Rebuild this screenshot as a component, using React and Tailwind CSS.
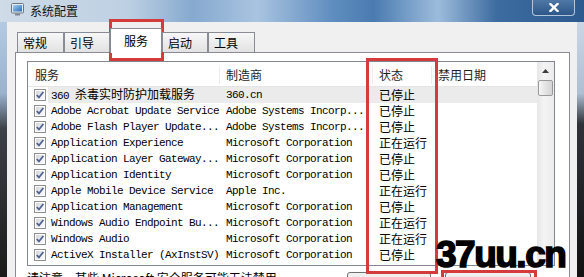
import React from "react";

const rows = [
  { name: "360 ", cjk: "杀毒实时防护加载服务", maker: "360.cn", state: "已停止", sel: true },
  { name: "Adobe Acrobat Update Service", maker: "Adobe Systems Incorp...", state: "已停止" },
  { name: "Adobe Flash Player Update...", maker: "Adobe Systems Incorp...", state: "已停止" },
  { name: "Application Experience", maker: "Microsoft Corporation", state: "正在运行" },
  { name: "Application Layer Gateway...", maker: "Microsoft Corporation", state: "已停止" },
  { name: "Application Identity", maker: "Microsoft Corporation", state: "已停止" },
  { name: "Apple Mobile Device Service", maker: "Apple Inc.", state: "正在运行" },
  { name: "Application Management", maker: "Microsoft Corporation", state: "已停止" },
  { name: "Windows Audio Endpoint Bu...", maker: "Microsoft Corporation", state: "正在运行" },
  { name: "Windows Audio", maker: "Microsoft Corporation", state: "正在运行" },
  { name: "ActiveX Installer (AxInstSV)", maker: "Microsoft Corporation", state: "已停止" },
  { name: "", maker: "", state: "" },
];

const tabs = [
  { label: "常规", w: "w-[47px] ml-[2px]" },
  { label: "引导", w: "w-[46px]" },
  { label: "服务", w: "w-[52px]", active: true },
  { label: "启动", w: "w-[46px]" },
  { label: "工具", w: "w-[47px]" },
];

const CheckBox = () => (
  <svg width="12" height="12" viewBox="0 0 12 12" className="shrink-0">
    <defs>
      <linearGradient id="cbfill" x1="0" y1="0" x2="1" y2="1">
        <stop offset="0" stopColor="#d6d8db" />
        <stop offset="1" stopColor="#fafafa" />
      </linearGradient>
    </defs>
    <rect x="0.5" y="0.5" width="11" height="11" fill="#fff" stroke="#8e8f8f" />
    <rect x="2" y="2" width="8" height="8" fill="url(#cbfill)" />
    <path d="M2.8 5.9 L4.9 8.6 L9.3 2.9" fill="none" stroke="#4b5f8c" strokeWidth="1.7" strokeLinejoin="round" />
  </svg>
);

const WinIcon = () => (
  <svg width="13" height="13" viewBox="0 0 13 13">
    <defs>
      <linearGradient id="scr" x1="0" y1="0" x2="1" y2="1">
        <stop offset="0" stopColor="#9fd0f5" />
        <stop offset="1" stopColor="#2b6cb6" />
      </linearGradient>
    </defs>
    <rect x="0.5" y="0.5" width="12" height="9.5" rx="1" fill="#e9ecef" stroke="#6d7680" />
    <rect x="2" y="2" width="9" height="6.5" fill="url(#scr)" />
    <rect x="4" y="10.5" width="5" height="2" fill="#7c8590" />
  </svg>
);

const CloseX = () => (
  <svg width="10" height="9" viewBox="0 0 10 9">
    <path d="M1.5 1 L8.5 8 M8.5 1 L1.5 8" stroke="#fff" strokeWidth="2.4" strokeLinecap="square" />
  </svg>
);

const mono = "font-['Liberation_Mono','Noto_Sans_CJK_SC',monospace] text-[11px] tracking-[-0.6px] text-black";

export default function App() {
  return (
    <div className="relative w-[584px] h-[277px] overflow-hidden flex flex-col bg-[#1c1c1c] font-['Noto_Sans_CJK_SC',sans-serif]">
      {/* title bar */}
      <div className="h-[22px] shrink-0 flex items-start bg-[linear-gradient(90deg,#cfdbe7_0%,#bdd0e3_22%,#86a9cf_33%,#a9c4e0_44%,#5f8dbf_57%,#4a7bb0_64%,#9dbcdc_75%,#3d6ca0_85%,#2c5a8e_100%)]">
        <div className="mt-[3px] ml-[11px]">
          <WinIcon />
        </div>
        <span className="ml-[6px] mt-[2px] text-[12px] leading-[17px] text-[#111]">系统配置</span>
        <div className="ml-auto mr-[9px] w-[43px] h-[16px] border border-t-0 border-[#b3c6dc] rounded-b-[4px] bg-[linear-gradient(180deg,#4f78a6,#2d5788)] flex items-center justify-center">
          <CloseX />
        </div>
      </div>

      <div className="flex-1 flex min-h-0">
        <div className="w-[7px] shrink-0 bg-[linear-gradient(180deg,#b4cae2_0%,#9ab2ce_28%,#3c4047_42%,#1a1a1a_100%)]" />

        <div className="flex-1 bg-[#f0f0f0] pl-[8px] pr-[7px] pt-[6px] flex flex-col min-w-0">
          {/* tabs */}
          <div className="h-[24px] flex items-end shrink-0 relative z-10">
            {tabs.map((t) =>
              t.active ? (
                <div
                  key={t.label}
                  className={`${t.w} h-[25px] -mb-px bg-white border border-b-0 border-[#898c95] flex items-start justify-center pt-[4px] text-[12px] leading-[16px] text-black`}
                >
                  {t.label}
                </div>
              ) : (
                <div
                  key={t.label}
                  className={`${t.w} h-[20px] bg-[linear-gradient(180deg,#f7f7f7,#e2e2e2)] border border-b-0 border-[#898c95] flex items-center pl-[5px] text-[12px] leading-[16px] text-black`}
                >
                  {t.label}
                </div>
              )
            )}
          </div>

          {/* panel */}
          <div className="flex-1 bg-white border border-[#898c95] pl-[11px] pr-[14px] pt-[8px] flex flex-col">
            <div className="h-[205px] shrink-0 border border-[#828790] flex overflow-hidden">
              <div className="flex-1 flex flex-col min-w-0">
                <div className="h-[25px] shrink-0 flex items-center pt-[2px] border-b border-[#e5e5e5] text-[12px] text-[#1e1e1e]">
                  <div className="w-[192px] pl-[7px] border-r border-[#ececec]">服务</div>
                  <div className="w-[153px] pl-[6px] border-r border-[#ececec]">制造商</div>
                  <div className="w-[59px] pl-[6px] border-r border-[#ececec]">状态</div>
                  <div className="flex-1 pl-[6px]">禁用日期</div>
                </div>
                {rows.map((r, i) => (
                  <div key={i} className="h-[16px] shrink-0 flex items-center">
                    <div className="w-[192px] flex items-center pl-[6px] gap-[2px] h-full">
                      <CheckBox />
                      <div className={`flex-1 h-full flex items-center pl-[3px] ${r.sel ? "bg-[#ebebeb]" : ""}`}>
                        {r.name && (
                          <span className={`${mono} whitespace-pre leading-[16px]`}>
                            {r.name}
                            {r.cjk && <span className="text-[12px] tracking-normal font-['Noto_Sans_CJK_SC',sans-serif]">{r.cjk}</span>}
                          </span>
                        )}
                      </div>
                    </div>
                    <div className={`flex-1 h-full flex items-center ${r.sel ? "bg-[#ebebeb]" : ""}`}>
                      <div className={`w-[153px] pl-[6px] whitespace-pre leading-[16px] ${mono}`}>{r.maker}</div>
                      <div className="w-[59px] pl-[6px] text-[12px] leading-[16px] text-black">{r.state}</div>
                      <div className="flex-1" />
                    </div>
                  </div>
                ))}
              </div>

              {/* scrollbar */}
              <div className="w-[17px] shrink-0 bg-[linear-gradient(90deg,#e6e6e6,#f4f4f4_40%,#ececec)] flex flex-col items-center">
                <div className="h-[17px] w-full flex items-center justify-center">
                  <svg width="7" height="4" viewBox="0 0 7 4">
                    <path d="M0 4 L3.5 0 L7 4 Z" fill="#3c3c3c" />
                  </svg>
                </div>
                <div className="mt-[1px] w-[15px] h-[16px] rounded-[2px] border border-[#9a9a9a] bg-[linear-gradient(90deg,#f6f6f6,#e4e4e4_50%,#d4d4d4)]" />
              </div>
            </div>

            <div className="mt-[4px] flex items-start">
              <span className="w-[320px] shrink-0 text-[12px] leading-[16px] text-black whitespace-nowrap">
                请注意，某些 Microsoft 安全服务可能无法禁用。
              </span>
              <div className="mt-[2px] w-[84px] h-[23px] rounded-[3px] border border-[#707070] bg-[linear-gradient(180deg,#f2f2f2,#dddddd)] text-[12px] flex items-center justify-center">
                全部启用(E)
              </div>
              <div className="mt-[2px] ml-[14px] w-[86px] h-[23px] rounded-[3px] border border-[#707070] bg-[linear-gradient(180deg,#f2f2f2,#dddddd)] text-[12px] flex items-center justify-center">
                全部禁用(D)
              </div>
            </div>
          </div>
        </div>

        <div className="w-[7px] shrink-0 bg-[linear-gradient(180deg,#c9d6e4_0%,#aebfd3_28%,#2e3238_40%,#111_100%)]" />
      </div>

      {/* annotations drawn over the screenshot */}
      <div className="absolute left-[109px] top-[19px] w-[55px] h-[42px] border-[3px] border-[#d43c3c]" />
      <div className="absolute left-[366px] top-[58px] w-[72px] h-[216px] border-[3px] border-[#d43c3c]" />
      <div className="absolute left-[441px] top-[270px] w-[96px] h-[30px] border-[3px] border-[#d43c3c]" />
      <div className="absolute left-[436px] top-[236px] font-['Liberation_Sans',sans-serif] font-bold text-[37px] leading-none tracking-[-1.5px] text-black [-webkit-text-stroke:1.6px_black]">
        37uu.cn
      </div>
    </div>
  );
}
